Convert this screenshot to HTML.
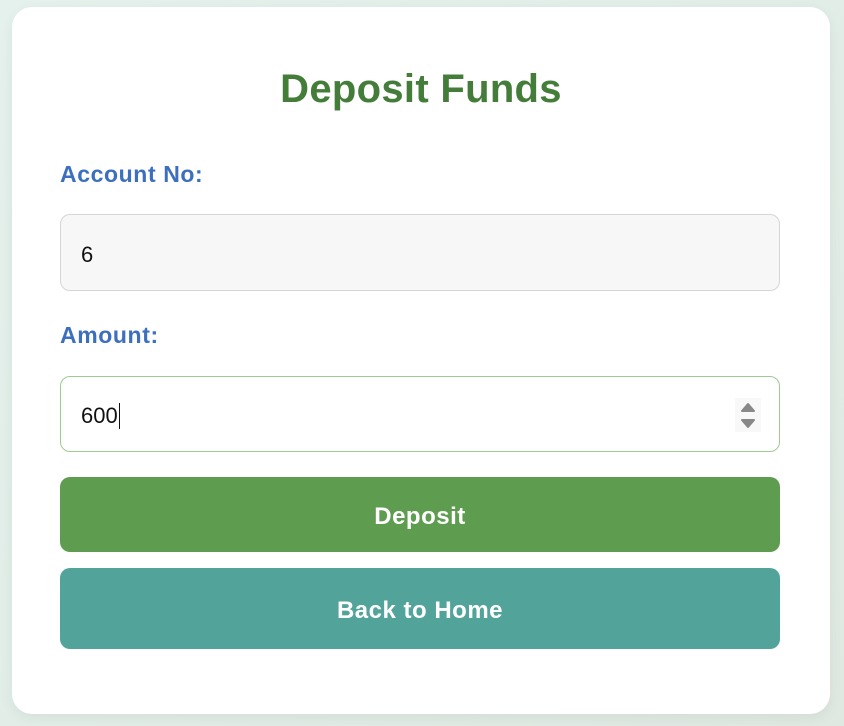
<!DOCTYPE html>
<html><head><style>
html,body{margin:0;padding:0}
body{width:844px;height:726px;background:linear-gradient(135deg,#e4f1ec,#dfe9e2);font-family:"Liberation Sans",sans-serif;position:relative;overflow:hidden}
.card{position:absolute;left:12px;top:7px;width:818px;height:707px;background:#fff;border-radius:20px;box-shadow:0 4px 14px rgba(0,0,0,0.06)}
h1{position:absolute;left:0;right:0;top:60px;margin:0;text-align:center;font-size:40px;font-weight:bold;color:#447d3a;letter-spacing:0.3px}
.lbl{position:absolute;left:48px;font-size:23px;font-weight:bold;color:#3d6fbf;letter-spacing:0.6px}
.inp{position:absolute;left:48px;width:720px;box-sizing:border-box;border-radius:10px;font-size:22px;color:#111;padding-left:20px;padding-top:4px;display:flex;align-items:center}
.btn{position:absolute;left:48px;width:720px;border-radius:10px;color:#fff;font-size:24px;font-weight:bold;display:flex;align-items:center;justify-content:center;letter-spacing:0.5px;padding-top:5px;box-sizing:border-box}
</style></head><body>
<div class="card">
<h1>Deposit Funds</h1>
<div class="lbl" style="top:154px">Account No:</div>
<div class="inp" style="top:207px;height:77px;background:#f7f7f7;border:1.5px solid #d6d6d6">6</div>
<div class="lbl" style="top:315px">Amount:</div>
<div class="inp" style="top:369px;height:76px;background:#fff;border:1.5px solid #9fcb93">600<span style="display:inline-block;width:1px;height:26px;background:#111;margin-left:1px"></span>
<svg style="position:absolute;right:18px;top:21px" width="26" height="34" viewBox="0 0 26 34"><rect x="0" y="0" width="26" height="34" fill="#f8f8f8"/><path d="M7 13 L13 6 L19 13Z" fill="#888" stroke="#888" stroke-linejoin="round" stroke-width="2"/><path d="M7 22 L19 22 L13 29Z" fill="#888" stroke="#888" stroke-linejoin="round" stroke-width="2"/></svg></div>
<div class="btn" style="top:470px;height:75px;background:#5e9d50">Deposit</div>
<div class="btn" style="top:561px;height:81px;background:#52a49a">Back to Home</div>
</div>
</body></html>
